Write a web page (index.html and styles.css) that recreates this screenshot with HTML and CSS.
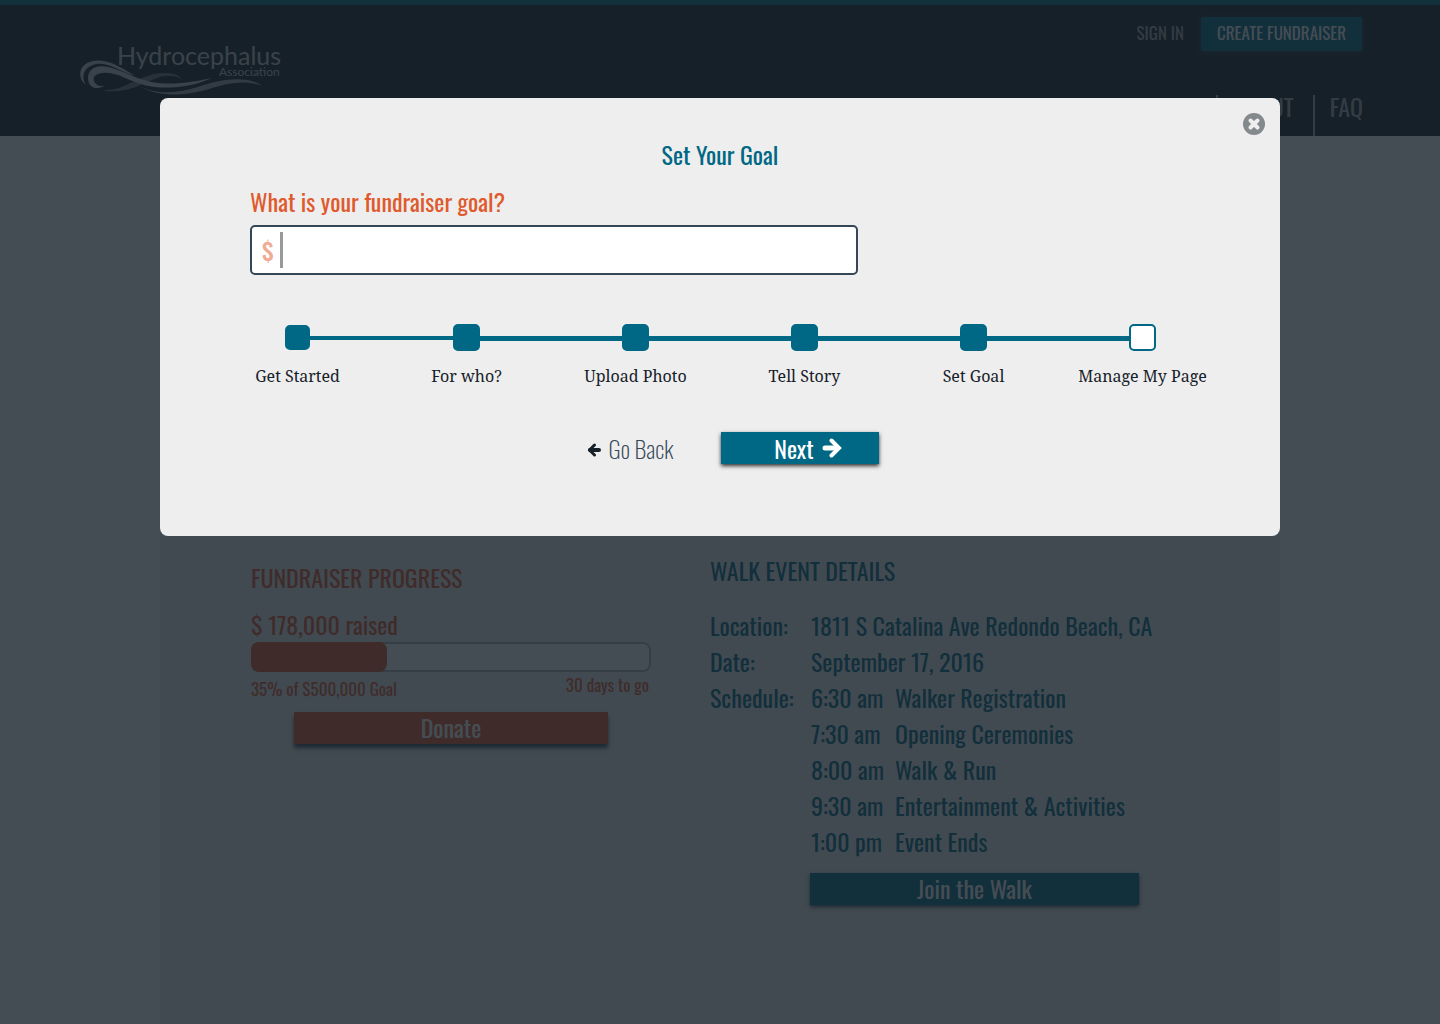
FILE: index.html
```html
<!DOCTYPE html>
<html lang="en">
<head>
<meta charset="utf-8">
<meta name="viewport" content="width=device-width, initial-scale=1">
<title>Set Your Goal - Hydrocephalus Association</title>
<link rel="stylesheet" href="styles.css">
</head>
<body>
<header class="site-header">
  <a class="logo" href="#" aria-label="Hydrocephalus Association">
    <svg width="210" height="54" viewBox="0 0 210 54" fill="currentColor">
      <path d="M6 43C-3 36 -2 22 13 19C28 16 42 26 55 34C40 29 28 20 16 22C3 25 1 35 6 43Z"/>
      <path d="M25.500 43C17 49 8 46 8 36C8 27 16 23 25 24.500C44 27 58 41 86 41.500C103 42 118 39 132 36C116 43 100 46 82 45.500C56 45 44 32 28 31C18 30 12 34 14 39C16 44 21 45 25.500 43Z"/>
      <path opacity=".5" d="M25 48C45 49 60 31 85 31C95 31 100 34 101 37C95 33 85 33 77 36C60 42 50 51 25 49Z"/>
      <path opacity=".8" d="M60 44.500C80 54 100 50 118 45C140 37 168 33 182 44C168 38 150 40 132 46C108 54 80 56 60 44.500Z"/>
      <text class="logo-name" x="37" y="23">Hydrocephalus</text>
      <text class="logo-sub" x="139" y="34">Association</text>
    </svg>
  </a>
  <div class="header-side">
    <div class="account">
      <a class="sign-in" href="#">SIGN IN</a>
      <button class="create" type="button">CREATE FUNDRAISER</button>
    </div>
    <nav class="main-nav">
      <a href="#">LOS ANGELES WALK</a>
      <a href="#">ABOUT</a>
      <a href="#">FAQ</a>
    </nav>
  </div>
</header>

<main class="page">
  <section class="progress-section">
    <h2 class="section-title">FUNDRAISER PROGRESS</h2>
    <p class="raised">$ 178,000 raised</p>
    <div class="bar" role="progressbar" aria-label="Raised" aria-valuenow="35" aria-valuemin="0" aria-valuemax="100">
      <div class="bar-fill" style="width: 34%"></div>
    </div>
    <div class="bar-notes">
      <span class="percent">35% of $500,000 Goal</span>
      <span>30 days to go</span>
    </div>
    <button class="btn donate" type="button">Donate</button>
  </section>

  <section class="event-section">
    <h2 class="section-title">WALK EVENT DETAILS</h2>
    <dl class="details">
      <dt>Location:</dt>
      <dd>1811 S Catalina Ave Redondo Beach, CA</dd>
      <dt>Date:</dt>
      <dd>September 17, 2016</dd>
      <dt>Schedule:</dt>
      <dd>
        <table class="schedule">
          <tr><th scope="row">6:30 am</th><td>Walker Registration</td></tr>
          <tr><th scope="row">7:30 am</th><td>Opening Ceremonies</td></tr>
          <tr><th scope="row">8:00 am</th><td>Walk &amp; Run</td></tr>
          <tr><th scope="row">9:30 am</th><td>Entertainment &amp; Activities</td></tr>
          <tr><th scope="row">1:00 pm</th><td>Event Ends</td></tr>
        </table>
      </dd>
    </dl>
    <button class="btn join" type="button">Join the Walk</button>
  </section>
</main>

<div class="backdrop">
  <form class="dialog" role="dialog" aria-modal="true" aria-labelledby="dialog-title">
    <button class="close" type="button" aria-label="Close">
      <svg width="22" height="22" viewBox="0 0 22 22">
        <circle cx="11" cy="11" r="11" fill="#84898c"/>
        <path d="M7.500 7.500l7 7M14.500 7.500l-7 7" stroke="#eee" stroke-width="4" stroke-linecap="round"/>
      </svg>
    </button>
    <h1 class="dialog-title" id="dialog-title">Set Your Goal</h1>
    <div class="field">
      <label for="goal">What is your fundraiser goal?</label>
      <div class="amount">
        <span class="currency">$</span>
        <input id="goal" type="text" inputmode="numeric">
      </div>
    </div>
    <ol class="steps">
      <li class="done">Get Started</li>
      <li class="done">For who?</li>
      <li class="done">Upload Photo</li>
      <li class="done">Tell Story</li>
      <li class="done">Set Goal</li>
      <li>Manage My Page</li>
    </ol>
    <div class="actions">
      <a class="back" href="#">
        <svg width="14" height="14" viewBox="0 0 14 14" fill="none" stroke="#172129" stroke-width="3">
          <path d="M7.500 2L2.500 7l5 5" stroke-linejoin="round" stroke-linecap="round"/><path d="M3 7H12" stroke-width="4" stroke-linecap="round"/>
        </svg>
        Go Back
      </a>
      <button class="btn next" type="submit">
        Next
        <svg width="20" height="20" viewBox="0 0 20 20" fill="none" stroke="#fff" stroke-width="4">
          <path d="M9.500 2.500L17 10l-7.500 7.500" stroke-linecap="round"/><path d="M3 10H15.500" stroke-width="5" stroke-linecap="round"/>
        </svg>
      </button>
    </div>
  </form>
</div>
</body>
</html>
```
FILE: styles.css
```css
*, *::before { box-sizing: border-box; }

body {
  margin: 0;
  background: #fff;
  color: #006885;
  font: 24px/36px Oswald, "Roboto Condensed", sans-serif;
}

h1, h2, p, dl, dd, ol { margin: 0; padding: 0; }
h1, h2 { font-size: 24px; font-weight: 400; }
a { color: inherit; text-decoration: none; }
button { border: 0; padding: 0; font: inherit; cursor: pointer; }

/* Header */
.site-header {
  display: flex;
  justify-content: space-between;
  min-height: 136px;
  padding: 0 77px 0 80px;
  border-top: 5px solid #006885;
  background: #172129;
}
.logo { padding-top: 37px; color: #c4c8cc; }
.logo svg { display: block; overflow: visible; }
.logo-name { font: 25px Lato, sans-serif; }
.logo-sub { font: 12px Lato, sans-serif; }
.header-side {
  display: flex;
  flex-direction: column;
  justify-content: space-between;
  align-items: flex-end;
  padding-top: 12px;
}
.account {
  display: flex;
  gap: 17px;
  padding-right: 1px;
  font-size: 17px;
  line-height: 32px;
}
.sign-in { color: #a3a8ab; }
.create {
  height: 34px;
  padding: 0 16px 2px;
  border-radius: 2px;
  background: #006885;
  box-shadow: 0 1px 5px #344759;
  color: #fff;
}
.main-nav {
  display: flex;
  color: #a3a8ab;
  line-height: 22px;
}
.main-nav a { height: 41px; padding: 0 19px 0 15px; border-right: 2px solid #a3a8ab; }
.main-nav a:last-child { padding-right: 0; border: 0; }

/* Page */
.page {
  display: grid;
  grid-template-columns: 400px 429px;
  gap: 59px;
  max-width: 1120px;
  min-height: 888px;
  margin: 0 auto;
  padding: 416px 91px 40px;
  background: #ededed;
}
.progress-section { padding-top: 7px; color: #e05a2d; }
.section-title { font-weight: 400; }
.raised { margin-top: 11px; }
.bar {
  height: 30px;
  border-radius: 8px;
  background: #fff;
  box-shadow: inset 0 0 0 2px #b0b5ba;
}
.bar-fill { height: 100%; border-radius: 8px; background: #e05a2d; }
.bar-notes {
  display: flex;
  justify-content: space-between;
  padding-right: 2px;
  font-size: 17px;
  line-height: 26px;
}
.percent { padding-top: 4px; }
.btn { display: block; height: 32px; padding-bottom: 2px; color: #fff; line-height: 30px; }
.donate {
  width: 314px;
  margin: 10px auto 0;
  background: #e05a2d;
  box-shadow: 0 4px 4px #344759;
}
.details {
  display: grid;
  grid-template-columns: 101px 1fr;
  margin-top: 19px;
  white-space: nowrap;
}
.schedule { border-collapse: collapse; }
.schedule th { width: 84px; padding: 0; font-weight: 400; text-align: left; }
.schedule td { padding: 0; }
.join {
  width: 329px;
  margin: 14px 0 0 auto;
  background: #006885;
  box-shadow: 0 2px 4px #344759;
}

/* Dialog */
.backdrop {
  position: fixed;
  inset: 0;
  padding-top: 98px;
  background: rgba(23, 33, 41, 0.8);
}
.dialog {
  position: relative;
  max-width: 1120px;
  margin: 0 auto;
  padding: 38px 53px 70px;
  border-radius: 8px;
  background: #eee;
}
.close { position: absolute; top: 15px; right: 15px; background: none; line-height: 0; }
.dialog-title { text-align: center; }
.field { max-width: 645px; margin-top: 11px; padding-left: 37px; color: #e05a2d; }
.field label { display: block; }
.amount {
  display: flex;
  align-items: center;
  height: 50px;
  margin-top: 6px;
  padding: 0 10px;
  border: 2px solid #344759;
  border-radius: 5px;
  background: #fff;
}
.currency { width: 18px; font-weight: 500; opacity: .5; }
.amount input {
  flex: 1;
  height: 36px;
  border: 0;
  border-left: 3px solid #999;
  padding: 0 8px;
  outline: 0;
  background: none;
  color: inherit;
  font: inherit;
}
.steps {
  display: grid;
  grid-template-columns: repeat(6, 1fr);
  margin-top: 49px;
  color: #172129;
  font: 16px/24px "Noto Serif", "Liberation Serif", serif;
  list-style: none;
  text-align: center;
  white-space: nowrap;
}
.steps li {
  --line: linear-gradient(#006885, #006885) no-repeat;
  display: flex;
  flex-direction: column;
  align-items: center;
  gap: 13px;
  background: var(--line) 0 12px / 100% 5px;
}
.steps li::before {
  content: "";
  width: 27px;
  height: 27px;
  border: 2px solid #006885;
  border-radius: 5px;
  background: #fff;
}
.steps .done::before { background: #006885; }
.steps li:first-child { background: var(--line) 100% 12px / 50% 4px; }
.steps li:first-child::before { width: 25px; height: 25px; margin: 1px; }
.steps li:nth-child(2) {
  background: var(--line) 0 12px / 50% 4px, var(--line) 100% 12px / 50% 5px;
}
.steps li:last-child { background: var(--line) 0 12px / 50% 5px; }
.actions {
  display: flex;
  justify-content: center;
  align-items: center;
  gap: 48px;
  margin-top: 42px;
  padding-left: 26px;
}
.back {
  display: flex;
  align-items: center;
  gap: 8px;
  color: #344759;
  font-weight: 200;
}
.back svg { margin-top: 4px; }
.next {
  display: flex;
  justify-content: center;
  align-items: center;
  gap: 8px;
  width: 158px;
  padding: 0 0 0 15px;
  background: #006885;
  box-shadow: 0 2px 4px rgba(0, 0, 0, .8);
}
```
